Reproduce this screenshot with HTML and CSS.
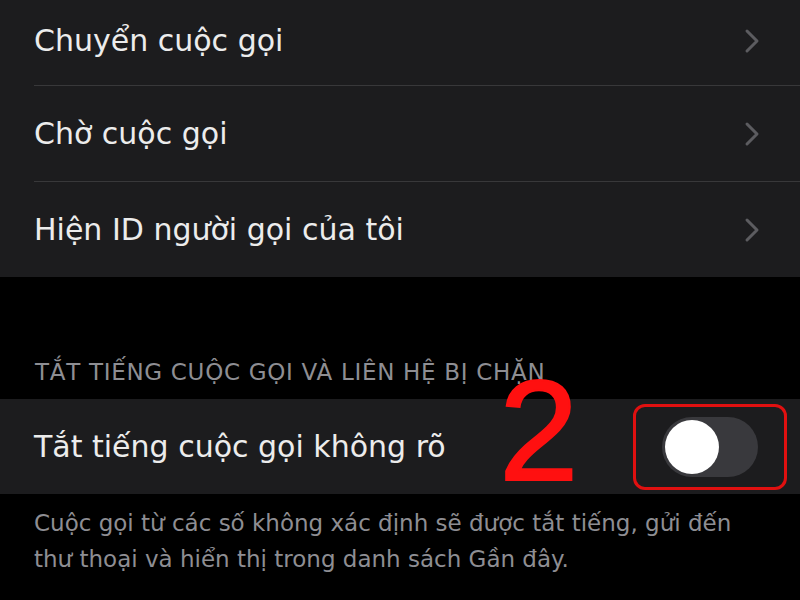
FILE: index.html
```html
<!DOCTYPE html>
<html lang="vi">
<head>
    <meta charset="UTF-8">
    <meta name="viewport" content="width=device-width, initial-scale=1.0">
    <title>Cài đặt điện thoại</title>
    <link rel="stylesheet" href="styles.css">
</head>
<body>
    <div class="group">
        <div class="row row-first">
            <span class="label">Chuyển cuộc gọi</span>
            <svg class="chevron" width="16" height="26" viewBox="0 0 16 26"><path d="M3 3 L13 13 L3 23" fill="none" stroke="#5c5c60" stroke-width="3" stroke-linecap="round" stroke-linejoin="round"/></svg>
        </div>
        <div class="row">
            <span class="label">Chờ cuộc gọi</span>
            <svg class="chevron" width="16" height="26" viewBox="0 0 16 26"><path d="M3 3 L13 13 L3 23" fill="none" stroke="#5c5c60" stroke-width="3" stroke-linecap="round" stroke-linejoin="round"/></svg>
        </div>
        <div class="row">
            <span class="label">Hiện ID người gọi của tôi</span>
            <svg class="chevron" width="16" height="26" viewBox="0 0 16 26"><path d="M3 3 L13 13 L3 23" fill="none" stroke="#5c5c60" stroke-width="3" stroke-linecap="round" stroke-linejoin="round"/></svg>
        </div>
    </div>

    <div class="section-header">TẮT TIẾNG CUỘC GỌI VÀ LIÊN HỆ BỊ CHẶN</div>

    <div class="group">
        <div class="row row-toggle">
            <span class="label">Tắt tiếng cuộc gọi không rõ</span>
            <span class="step">2</span>
            <div class="highlight">
                <div class="switch">
                    <div class="knob"></div>
                </div>
            </div>
        </div>
    </div>

    <p class="footer">Cuộc gọi từ các số không xác định sẽ được tắt tiếng, gửi đến thư thoại và hiển thị trong danh sách Gần đây.</p>
</body>
</html>
```

FILE: styles.css
```css
body {
    margin: 0;
    background-color: #000;
    font-family: "DejaVu Sans", "Liberation Sans", sans-serif;
    width: 800px;
    height: 600px;
    overflow: hidden;
}
.group {
    background-color: #1c1c1e;
    padding-left: 34px;
}
.row {
    display: flex;
    align-items: center;
    height: 95px;
    padding-right: 40px;
    border-top: 1px solid #38383a;
    position: relative;
}
.row-first {
    height: 81px;
    padding-bottom: 4px;
    border-top: none;
}
.label {
    flex: 1;
    color: #ececec;
    font-size: 30px;
}
.chevron {
    display: block;
}
.section-header {
    color: #8e8e93;
    font-size: 23px;
    letter-spacing: 0.7px;
    padding: 82px 0 14px 35px;
}
.row-toggle {
    border-top: none;
    height: 95px;
    padding-right: 13px;
}
.step {
    position: absolute;
    left: 465px;
    top: -40px;
    color: #ff1010;
    font-family: "Liberation Sans", Arial, sans-serif;
    font-size: 143px;
    line-height: 1;
    -webkit-text-stroke: 2px #ff1010;
}
.highlight {
    border: 3px solid #e01010;
    border-radius: 12px;
    width: 148px;
    height: 80px;
    display: flex;
    align-items: center;
    justify-content: center;
}
.switch {
    width: 96px;
    height: 60px;
    border-radius: 30px;
    background-color: #39393d;
    display: flex;
    align-items: center;
    padding-left: 3px;
    box-sizing: border-box;
}
.knob {
    width: 54px;
    height: 54px;
    border-radius: 50%;
    background-color: #fff;
}
.footer {
    margin: 0;
    padding: 11px 45px 0 34px;
    color: #8e8e93;
    font-size: 23px;
    line-height: 36px;
}
```
